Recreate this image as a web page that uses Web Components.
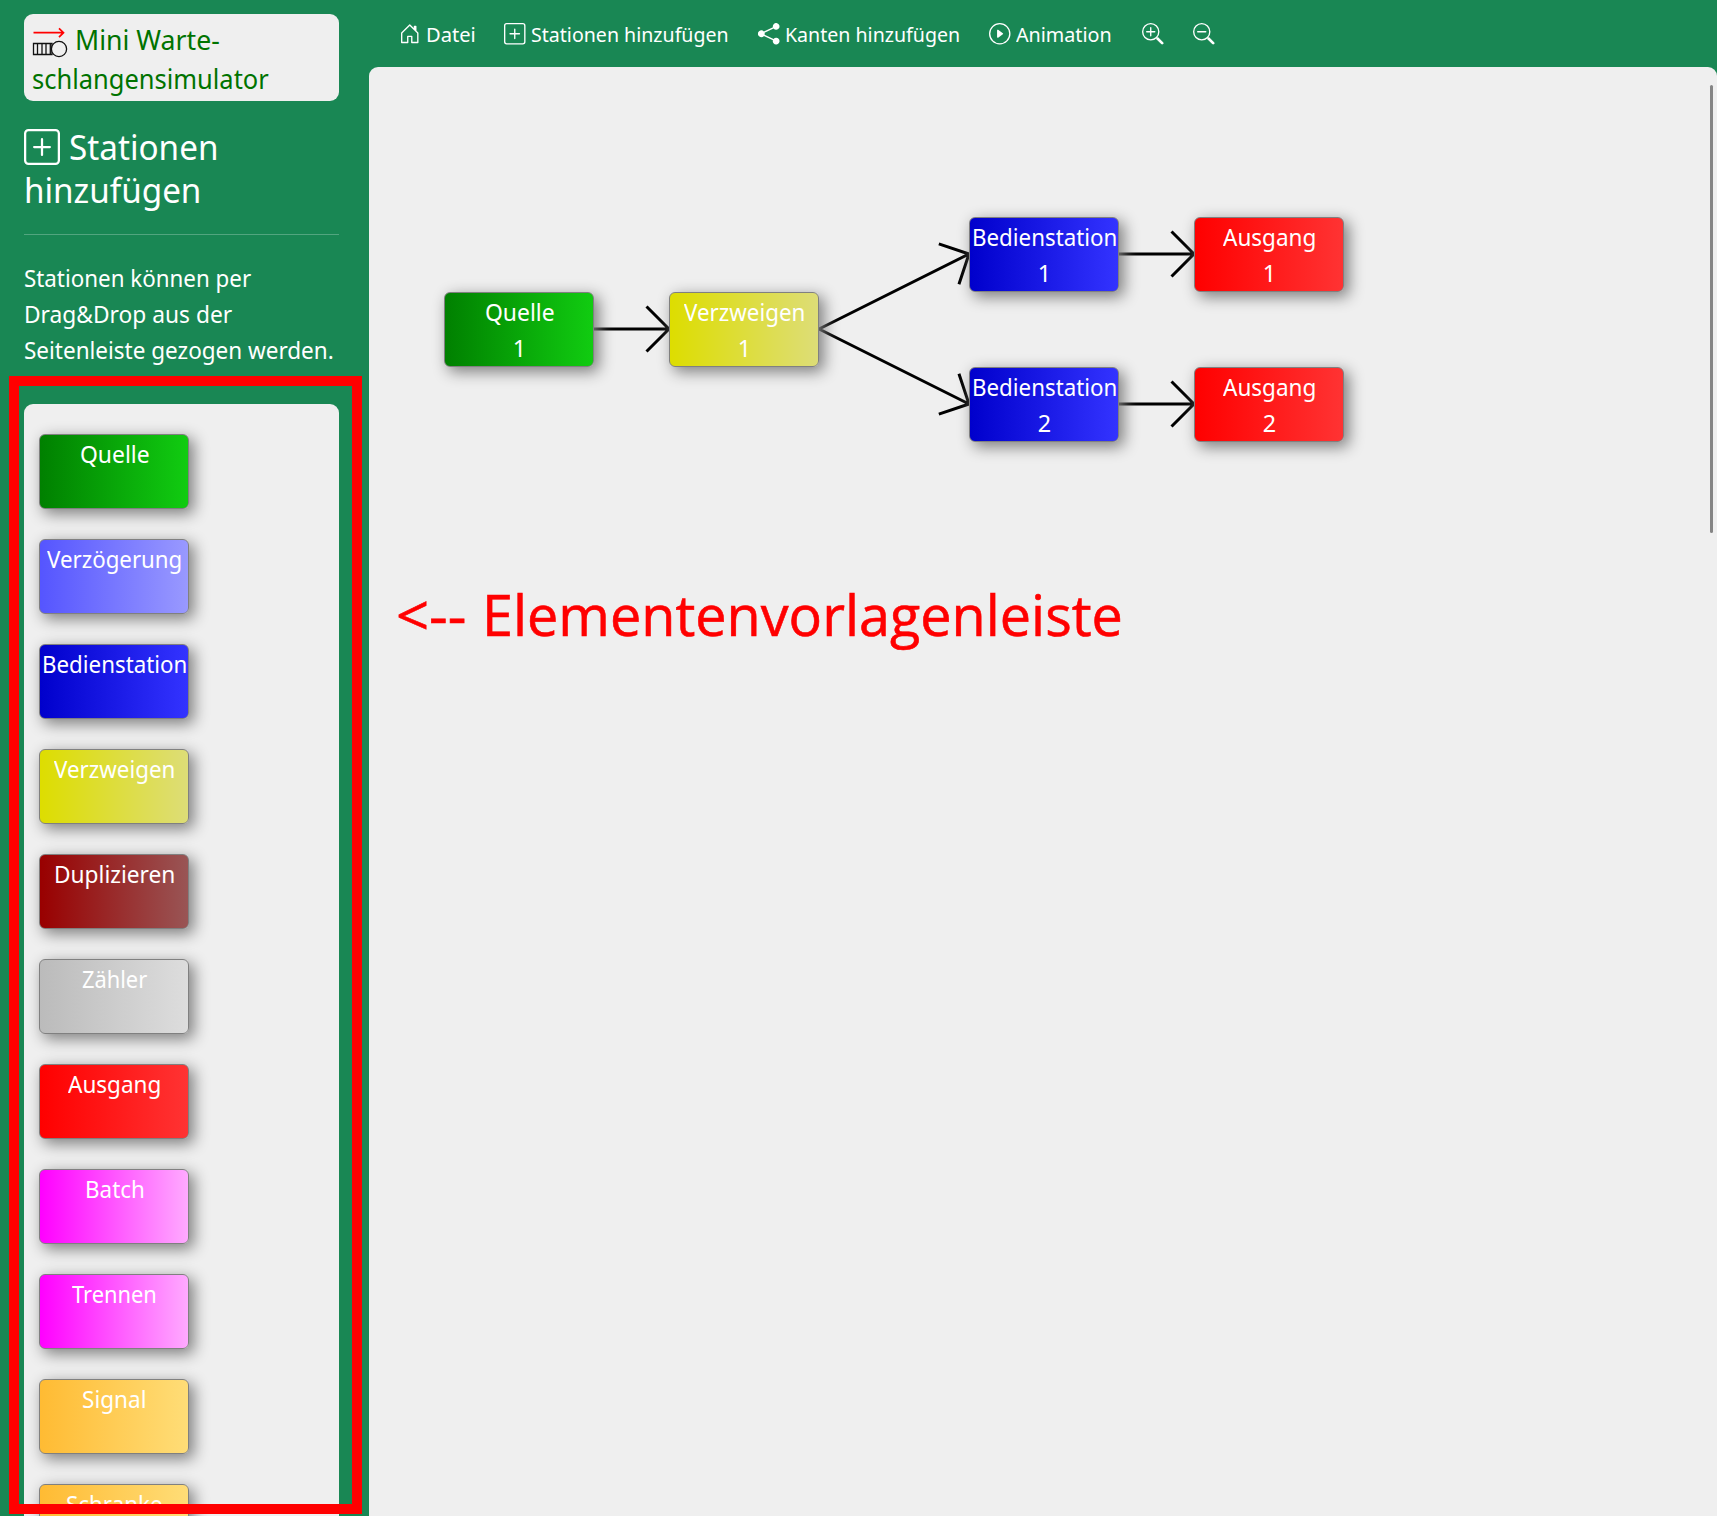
<!DOCTYPE html>
<html lang="de">
<head>
<meta charset="utf-8">
<title>Mini Warteschlangensimulator</title>
<style>
  html, body { margin: 0; height: 100%; overflow: hidden; }
  body { font-family: "Noto Sans", sans-serif; background: #198754; color: #fff; }
</style>
</head>
<body>
<queue-app></queue-app>
<script>
const ICONS = {
  house: '<path d="M8.354 1.146a.5.5 0 0 0-.708 0l-6 6A.5.5 0 0 0 1.5 7.5v7a.5.5 0 0 0 .5.5h4.5a.5.5 0 0 0 .5-.5v-4h2v4a.5.5 0 0 0 .5.5H14a.5.5 0 0 0 .5-.5v-7a.5.5 0 0 0-.146-.354L13 5.793V2.5a.5.5 0 0 0-.5-.5h-1a.5.5 0 0 0-.5.5v1.293L8.354 1.146zM2.5 14V7.707l5.5-5.5 5.5 5.5V14H10v-4a.5.5 0 0 0-.5-.5h-3a.5.5 0 0 0-.5.5v4H2.5z"/>',
  plus: '<path d="M14 1a1 1 0 0 1 1 1v12a1 1 0 0 1-1 1H2a1 1 0 0 1-1-1V2a1 1 0 0 1 1-1h12zM2 0a2 2 0 0 0-2 2v12a2 2 0 0 0 2 2h12a2 2 0 0 0 2-2V2a2 2 0 0 0-2-2H2z"/><path d="M8 4a.5.5 0 0 1 .5.5v3h3a.5.5 0 0 1 0 1h-3v3a.5.5 0 0 1-1 0v-3h-3a.5.5 0 0 1 0-1h3v-3A.5.5 0 0 1 8 4z"/>',
  share: '<path d="M11 2.5a2.5 2.5 0 1 1 .603 1.628l-6.718 3.12a2.499 2.499 0 0 1 0 1.504l6.718 3.12a2.5 2.5 0 1 1-.488.876l-6.718-3.12a2.5 2.5 0 1 1 0-3.256l6.718-3.12A2.5 2.5 0 0 1 11 2.5z"/>',
  play: '<path d="M8 15A7 7 0 1 1 8 1a7 7 0 0 1 0 14zm0 1A8 8 0 1 0 8 0a8 8 0 0 0 0 16z"/><path d="M6.271 5.055a.5.5 0 0 1 .52.038l3.5 2.5a.5.5 0 0 1 0 .814l-3.5 2.5A.5.5 0 0 1 6 10.5v-5a.5.5 0 0 1 .271-.445z"/>',
  lens: '<path fill-rule="evenodd" d="M6.5 12a5.5 5.5 0 1 0 0-11 5.5 5.5 0 0 0 0 11zM13 6.5a6.5 6.5 0 1 1-13 0 6.5 6.5 0 0 1 13 0z"/><path d="M10.344 11.742c.03.04.062.078.098.115l3.85 3.85a1 1 0 0 0 1.415-1.414l-3.85-3.85a1.007 1.007 0 0 0-.115-.1 6.538 6.538 0 0 1-1.398 1.4z"/>',
};
ICONS.zoomin = ICONS.lens + '<path d="M6.5 3a.5.5 0 0 1 .5.5V6h2.500a.5.5 0 0 1 0 1H7v2.500a.5.5 0 0 1-1 0V7H3.500a.5.5 0 0 1 0-1H6V3.500a.5.5 0 0 1 .5-.5z"/>';
ICONS.zoomout = ICONS.lens + '<path d="M3 6.5a.5.5 0 0 1 .5-.5h6a.5.5 0 0 1 0 1h-6a.5.5 0 0 1-.5-.5z"/>';

const define = (name, markup, ready) => customElements.define(name, class extends HTMLElement {
  connectedCallback() {
    if (this.shadowRoot) return;
    this.attachShadow({ mode: 'open' }).innerHTML = typeof markup === 'function' ? markup(this) : markup;
    if (ready) ready(this);
  }
});

// Scales one line of text horizontally so that its drawn width is the "ink" attribute.
define('fit-text', `<style>
  :host { display: inline-block; white-space: nowrap; }
  span { display: inline-block; transform-origin: 0 0; }
</style><span><slot></slot></span>`, el => {
  const cs = getComputedStyle(el);
  const ctx = document.createElement('canvas').getContext('2d');
  ctx.font = `${cs.fontWeight} ${cs.fontSize} ${cs.fontFamily}`;
  const m = ctx.measureText(el.textContent.trim());
  const k = el.getAttribute('ink') / (m.actualBoundingBoxLeft + m.actualBoundingBoxRight);
  el.style.width = (m.width * k) + 'px';
  el.shadowRoot.querySelector('span').style.transform = `scaleX(${k})`;
});

define('bi-icon', el => `<style>
  :host { display: inline-block; width: var(--size, 21.5px); height: var(--size, 21.5px); flex: none; }
  svg { display: block; width: 100%; height: 100%; }
</style><svg viewBox="0 0 16 16" fill="currentColor">${ICONS[el.getAttribute('name')]}</svg>`);

define('nav-item', el => `<style>
  :host { display: flex; align-items: center; gap: 5px; flex: none; height: 32px; font-size: 20.6px; line-height: 32px; }
</style><bi-icon name="${el.getAttribute('icon')}"></bi-icon><slot></slot>`);

define('nav-bar', `<style>
  :host { display: flex; box-sizing: border-box; height: 67px; padding: 18px 0 0 29.5px; }
  nav-item:nth-of-type(1) { width: 105.5px; gap: 6px; }
  nav-item:nth-of-type(2) { width: 254px; }
  nav-item:nth-of-type(3) { width: 231px; }
  nav-item:nth-of-type(4) { width: 153px; }
  nav-item:nth-of-type(5) { width: 51px; }
</style>
<nav-item icon="house"><fit-text ink="46.500">Datei</fit-text></nav-item>
<nav-item icon="plus"><fit-text ink="196">Stationen hinzufügen</fit-text></nav-item>
<nav-item icon="share"><fit-text ink="172.500">Kanten hinzufügen</fit-text></nav-item>
<nav-item icon="play"><fit-text ink="95">Animation</fit-text></nav-item>
<nav-item icon="zoomin"></nav-item>
<nav-item icon="zoomout"></nav-item>`);

const KINDS = {
  Quelle: ['#008000', '#11cc11', 67.5],
  'Verzögerung': ['#5555ff', '#9999ff', 134],
  Bedienstation: ['#0000cc', '#3333ff', 142],
  Verzweigen: ['#dddd00', '#dddd77', 120],
  Duplizieren: ['#990000', '#995555', 118],
  'Zähler': ['#bbbbbb', '#dddddd', 65.5],
  Ausgang: ['#ff0000', '#ff3333', 92],
  Batch: ['#ff00ff', '#ffaaff', 56.5],
  Trennen: ['#ff00ff', '#ffaaff', 83.5],
  Signal: ['#ffbb33', '#ffdd77', 62.5],
  Schranke: ['#ffbb33', '#ffdd77', 94.5],
};

define('station-box', el => {
  const kind = el.getAttribute('kind'), nr = el.getAttribute('nr');
  const [from, to, ink] = KINDS[kind];
  return `<style>
  :host { display: flex; flex-direction: column; align-items: center; flex: none; box-sizing: border-box;
    width: 150px; height: 75px; padding: 1px 0 0 1px; border: 1px solid gray; border-radius: 6px;
    background: linear-gradient(to right, ${from}, ${to}); box-shadow: 4.5px 4.5px 15px gray;
    font-size: 23.4px; line-height: 36px; color: #fff; }
  div { height: 36px; white-space: nowrap; }
</style><div><fit-text ink="${ink}">${kind}</fit-text></div>${nr ? `<div>${nr}</div>` : ''}`;
});

define('brand-box', `<style>
  :host { display: block; box-sizing: border-box; flex: none; height: 87px; padding: 6px 7.5px 0; border-radius: 9px;
    background: #efefef; color: #007300; font-size: 27.5px; line-height: 39px; }
  div { display: flex; height: 39px; }
  svg { width: 36px; height: 32px; margin: 7px 7px 0 .5px; flex: none; }
</style>
<div><svg viewBox="0 0 36 32" fill="none">
  <path d="M1.500 5.700H31M27 1.300l4.500 4.400-4.500 4.400" stroke="#f00" stroke-width="1.700"/>
  <g stroke="#111" stroke-width="1.300"><path d="M1.500 16.500H20V27.500H1.500zM5.500 16.500v11M10 16.500v11M14 16.500v11M18.300 16.500v11"/>
  <circle cx="27" cy="22" r="7.600" fill="#efefef"/></g>
</svg><fit-text ink="142">Mini Warte-</fit-text></div>
<div><fit-text ink="235.500">schlangensimulator</fit-text></div>`);

define('station-palette', `<style>
  :host { display: flex; flex-direction: column; gap: 30px; box-sizing: border-box; flex: none; height: 1200px;
    padding: 30px 15px; border-radius: 9px; background: #efefef; }
</style>` + Object.keys(KINDS).map(k => `<station-box kind="${k}"></station-box>`).join(''));

define('side-bar', `<style>
  :host { display: flex; flex-direction: column; box-sizing: border-box; width: 369px; height: 1516px;
    padding: 14px 30px 0 24px; overflow: hidden; flex: none; }
  h2 { margin: 24px 0 0; flex: none; font-size: 35px; font-weight: 400; line-height: 43.2px; height: 86px; }
  h2 div { display: flex; height: 43px; }
  bi-icon { --size: 36px; margin: 4px 9px 0 0; }
  hr { box-sizing: border-box; flex: none; width: 100%; height: 1px; margin: 23px 0 25px; border: 0; background: #fff; opacity: .25; }
  section { flex: none; margin: 0 0 36px; font-size: 23.4px; line-height: 36px; }
  section div { height: 36px; }
</style>
<brand-box></brand-box>
<h2><div><bi-icon name="plus"></bi-icon><fit-text ink="146">Stationen</fit-text></div>
<div><fit-text ink="173">hinzufügen</fit-text></div></h2>
<hr>
<section>
  <div><fit-text ink="226.500">Stationen können per</fit-text></div>
  <div><fit-text ink="206.500">Drag&amp;Drop aus der</fit-text></div>
  <div><fit-text ink="307.500">Seitenleiste gezogen werden.</fit-text></div>
</section>
<station-palette></station-palette>`);

// Nodes sit at free coordinates on the drawing surface.
const NODES = [['Quelle', 1, 75, 225], ['Verzweigen', 1, 300, 225], ['Bedienstation', 1, 600, 150],
  ['Bedienstation', 2, 600, 300], ['Ausgang', 1, 825, 150], ['Ausgang', 2, 825, 300]];
const EDGES = [[0, 1], [1, 2], [1, 3], [2, 4], [3, 5]];
const edgePath = ([a, b]) => {
  const x1 = NODES[a][2] + 150, y1 = NODES[a][3] + 37, x2 = NODES[b][2], y2 = NODES[b][3] + 37;
  const t = Math.atan2(y2 - y1, x2 - x1), L = 31.8, q = Math.PI * .75;
  const leg = s => `${x2 + L * Math.cos(t + s)} ${y2 + L * Math.sin(t + s)}`;
  return `M${x1} ${y1}L${x2} ${y2}M${leg(q)}L${x2} ${y2}L${leg(-q)}`;
};

define('model-canvas', `<style>
  :host { display: block; position: relative; flex: 1; border-radius: 9px 9px 0 0; background: #efefef; overflow: hidden; }
  svg, station-box, .note, .thumb { position: absolute; }
  svg { left: 0; top: 0; width: 1348px; height: 600px; }
  .note { left: 26.5px; top: 507px; font: 57px/80px "Open Sans", sans-serif; color: #f00; display: flex; -webkit-text-stroke: .6px #f00; }
  .note fit-text + fit-text { margin-left: 16.5px; }
  .thumb { right: 4px; top: 18px; width: 3px; height: 448px; border-radius: 1.5px; background: #858585; }
</style>
<svg fill="none" stroke="#000" stroke-width="3" stroke-linejoin="bevel"><path d="${EDGES.map(edgePath).join('')}"/></svg>`
+ NODES.map(([k, n, x, y]) => `<station-box kind="${k}" nr="${n}" style="left:${x}px;top:${y}px"></station-box>`).join('')
+ `<div class="note"><fit-text ink="67">&lt;--</fit-text><fit-text ink="634">Elementenvorlagenleiste</fit-text></div><div class="thumb"></div>`);

define('queue-app', `<style>
  :host { display: flex; position: relative; width: 1717px; height: 1516px; overflow: hidden; background: #198754; }
  main { display: flex; flex-direction: column; flex: 1; }
  .frame { position: absolute; box-sizing: border-box; left: 9px; top: 376px; width: 353px; height: 1138px; border: 10px solid #f00; }
</style>
<side-bar></side-bar><main><nav-bar></nav-bar><model-canvas></model-canvas></main><div class="frame"></div>`);
</script>
</body>
</html>
